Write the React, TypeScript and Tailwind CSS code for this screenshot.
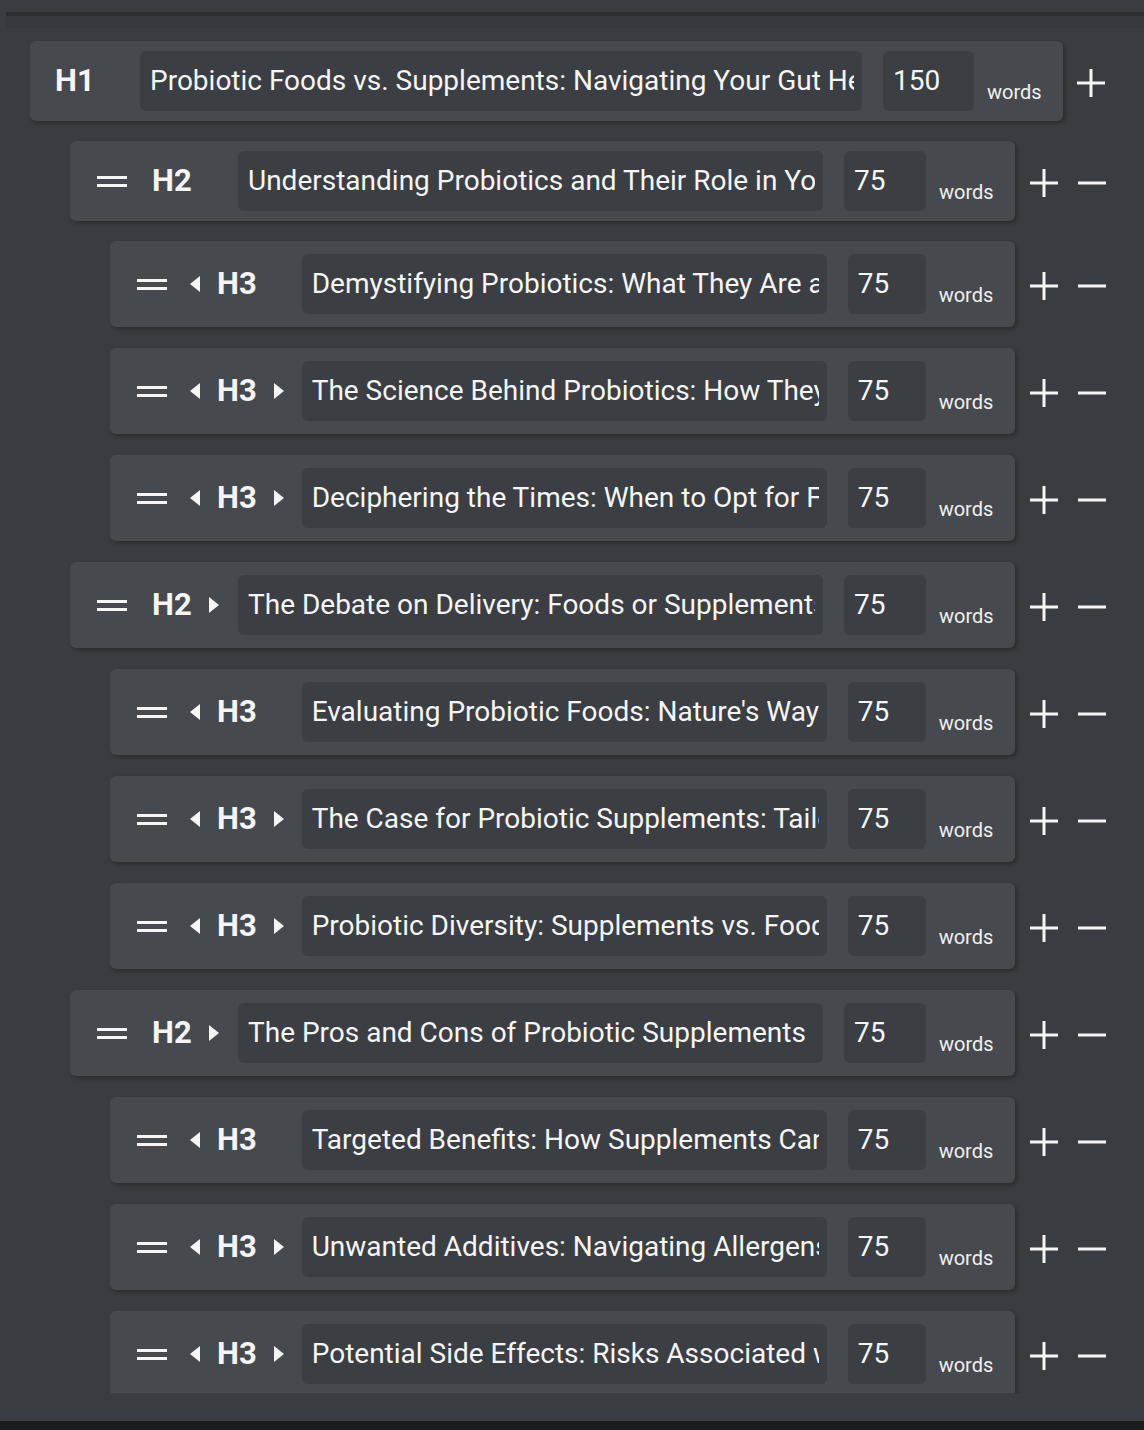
import type { ReactNode } from "react"

type Row = {
  level: 1 | 2 | 3
  title: string
  words: number
  left?: boolean
  right?: boolean
}

const rows: Row[] = [
  { level: 1, title: "Probiotic Foods vs. Supplements: Navigating Your Gut Health Journey", words: 150 },
  { level: 2, title: "Understanding Probiotics and Their Role in Your Health", words: 75 },
  { level: 3, title: "Demystifying Probiotics: What They Are and How They Work", words: 75, left: true },
  { level: 3, title: "The Science Behind Probiotics: How They Benefit Gut Health", words: 75, left: true, right: true },
  { level: 3, title: "Deciphering the Times: When to Opt for Foods or Supplements", words: 75, left: true, right: true },
  { level: 2, title: "The Debate on Delivery: Foods or Supplements?", words: 75, right: true },
  { level: 3, title: "Evaluating Probiotic Foods: Nature's Way to Gut Health", words: 75, left: true },
  { level: 3, title: "The Case for Probiotic Supplements: Tailored Support", words: 75, left: true, right: true },
  { level: 3, title: "Probiotic Diversity: Supplements vs. Foods", words: 75, left: true, right: true },
  { level: 2, title: "The Pros and Cons of Probiotic Supplements", words: 75, right: true },
  { level: 3, title: "Targeted Benefits: How Supplements Can Help", words: 75, left: true },
  { level: 3, title: "Unwanted Additives: Navigating Allergens and Fillers", words: 75, left: true, right: true },
  { level: 3, title: "Potential Side Effects: Risks Associated with Supplements", words: 75, left: true, right: true },
]

const font = { fontFamily: "Roboto, 'Noto Sans', Arial, sans-serif" }

function Plus() {
  return (
    <svg width="28" height="28" viewBox="0 0 28 28" className="shrink-0">
      <rect x="0" y="12.5" width="28" height="3" fill="#f5f5f5" />
      <rect x="12.5" y="0" width="3" height="28" fill="#f5f5f5" />
    </svg>
  )
}

function Minus() {
  return (
    <svg width="28" height="28" viewBox="0 0 28 28" className="shrink-0">
      <rect x="0" y="12.5" width="28" height="3" fill="#f5f5f5" />
    </svg>
  )
}

// drag handle: two short bars
function Handle() {
  return (
    <div className="w-[30px] flex flex-col gap-[5px] shrink-0 cursor-grab">
      <div className="h-[3px] bg-[#f5f5f5]" />
      <div className="h-[3px] bg-[#f5f5f5]" />
    </div>
  )
}

function Caret({ dir, show = true }: { dir: "left" | "right"; show?: boolean }) {
  return (
    <svg width="10" height="16" viewBox="0 0 10 16" className={`shrink-0 ${show ? "" : "invisible"}`}>
      {dir === "left" ? <path d="M10 0 L0 8 L10 16 Z" fill="#f5f5f5" /> : <path d="M0 0 L10 8 L0 16 Z" fill="#f5f5f5" />}
    </svg>
  )
}

function Field({ w, children }: { w: string; children: ReactNode }) {
  return (
    <div className={`${w} h-[60px] shrink-0 rounded-[6px] bg-[#3b3e42] pl-[10px] pr-[8px] flex items-center overflow-hidden`}>
      <span className="whitespace-nowrap overflow-hidden text-[28px] text-[#f5f5f5] leading-[34px]">{children}</span>
    </div>
  )
}

function Words({ n, w }: { n: number; w: string }) {
  return (
    <>
      <Field w={w}>{n}</Field>
      <span className="ml-[13px] mt-[22px] text-[20px] leading-[24px] text-[#f0f0f0]">words</span>
    </>
  )
}

function OutlineRow({ row, index }: { row: Row; index: number }) {
  const Hlabel = (
    <span className="text-[31px] font-bold leading-[36px] text-[#f5f5f5] w-[40px] shrink-0">H{row.level}</span>
  )

  if (row.level === 1) {
    return (
      <div className="flex items-center mb-[20px]">
        <div className="ml-[30px] w-[1033px] h-[80px] rounded-[6px] bg-[#464a4e] shadow-[2px_2px_4px_rgba(0,0,0,0.28)] flex items-center pl-[25px]">
          <span className="text-[31px] font-bold leading-[36px] text-[#f5f5f5] w-[85px] shrink-0">H1</span>
          <Field w="w-[722px]">{row.title}</Field>
          <div className="w-[21px] shrink-0" />
          <Words n={row.words} w="w-[91px]" />
        </div>
        <div className="ml-[14px] mt-[4px]">
          <Plus />
        </div>
      </div>
    )
  }

  const first = index === 1
  const h2 = row.level === 2

  return (
    <div className={`flex items-center ${first ? "mb-[20px]" : "mb-[21px]"}`}>
      <div
        className={`${h2 ? "ml-[70px] w-[945px]" : "ml-[110px] w-[905px]"} ${first ? "h-[80px]" : "h-[86px]"} rounded-[6px] bg-[#464a4e] shadow-[2px_2px_4px_rgba(0,0,0,0.28)] flex items-center pl-[27px]`}
      >
        <Handle />
        {h2 ? (
          <>
            <div className="ml-[25px] w-[86px] shrink-0 flex items-center">
              {Hlabel}
              <div className="ml-[17px]">
                <Caret dir="right" show={!!row.right} />
              </div>
            </div>
            <Field w="w-[585px]">{row.title}</Field>
            <div className="w-[21px] shrink-0" />
            <Words n={row.words} w="w-[82px]" />
          </>
        ) : (
          <>
            <div className="ml-[23px]">
              <Caret dir="left" show={!!row.left} />
            </div>
            <div className="ml-[17px]">{Hlabel}</div>
            <div className="ml-[17px]">
              <Caret dir="right" show={!!row.right} />
            </div>
            <div className="ml-[18px]">
              <Field w="w-[525px]">{row.title}</Field>
            </div>
            <div className="w-[21px] shrink-0" />
            <Words n={row.words} w="w-[78px]" />
          </>
        )}
      </div>
      <div className="ml-[15px] mt-[4px]">
        <Plus />
      </div>
      <div className="ml-[20px] mt-[4px]">
        <Minus />
      </div>
    </div>
  )
}

export default function App() {
  return (
    <div className="w-[1144px] h-[1430px] bg-[#1b1c1e] overflow-hidden" style={font}>
      <div className="h-[1421px] bg-[#393c40] flex flex-col">
        <div className="h-[12px] shrink-0" />
        <div className="ml-[6px] h-[4px] bg-[#2c2f32] shrink-0" />
        <div className="ml-[6px] h-[12px] bg-[#36393d] shrink-0" />
        <div className="h-[1365px] overflow-hidden pt-[13px] shrink-0">
          {rows.map((r, i) => (
            <OutlineRow key={i} row={r} index={i} />
          ))}
        </div>
      </div>
    </div>
  )
}
